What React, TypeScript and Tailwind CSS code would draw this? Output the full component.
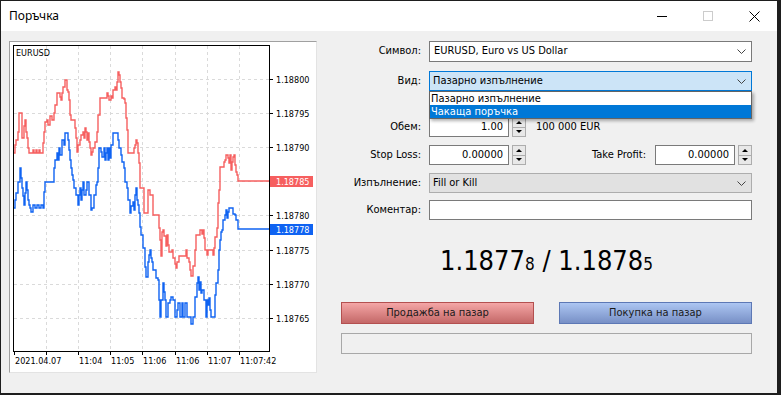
import React from "react";

const RED = "#f65f5f";
const BLUE = "#0f63f2";

const redPts: number[][] = [
  [14, 153], [15, 145], [16, 140], [18, 132], [19, 113], [21, 113], [22, 125], [22, 138], [24, 126], [25, 120],
  [26, 132], [27, 138], [28, 148], [29, 153], [32, 153], [33, 150], [34, 153], [36, 150], [37, 153], [39, 150],
  [40, 153], [42, 153], [43, 143], [44, 132], [45, 122], [47, 120], [48, 125], [50, 116], [52, 120], [54, 113],
  [55, 105], [57, 93], [59, 93], [60, 97], [61, 100], [62, 93], [63, 87], [65, 87], [65, 80], [67, 80],
  [67, 90], [68, 92], [69, 100], [70, 115], [71, 120], [74, 120], [75, 128], [76, 138], [77, 152], [78, 145],
  [80, 140], [81, 135], [83, 132], [84, 138], [85, 128], [86, 132], [87, 140], [88, 133], [89, 142], [90, 148],
  [91, 155], [92, 152], [93, 148], [95, 142], [97, 132], [98, 115], [100, 98], [106, 98], [107, 93], [108, 96],
  [109, 100], [111, 96], [112, 98], [113, 90], [115, 87], [116, 90], [117, 82], [118, 72], [119, 75], [120, 82],
  [121, 88], [122, 98], [124, 99], [125, 103], [126, 118], [127, 130], [128, 153], [133, 153], [134, 148], [135, 145],
  [136, 140], [137, 143], [138, 153], [139, 163], [140, 188], [143, 188], [144, 213], [147, 213], [148, 190], [150, 195],
  [153, 195], [153, 215], [158, 215], [159, 228], [160, 240], [161, 256], [162, 232], [163, 230], [164, 236], [166, 246],
  [167, 235], [168, 245], [169, 252], [172, 250], [173, 258], [175, 264], [176, 268], [177, 262], [179, 256], [185, 256],
  [186, 250], [187, 258], [189, 262], [190, 270], [191, 276], [193, 266], [195, 250], [196, 235], [199, 235], [200, 230],
  [202, 234], [203, 230], [204, 238], [205, 250], [207, 255], [208, 250], [211, 250], [213, 255], [214, 248], [215, 237],
  [217, 228], [218, 203], [219, 190], [220, 167], [223, 167], [224, 162], [225, 160], [226, 155], [228, 158], [229, 163],
  [230, 155], [231, 170], [232, 162], [233, 157], [234, 155], [235, 165], [236, 172], [237, 175], [238, 181], [269, 181],
];

const bluePts: number[][] = [
  [14, 208], [15, 200], [16, 193], [18, 182], [20, 168], [21, 178], [22, 188], [23, 196], [24, 205], [25, 193],
  [26, 182], [27, 190], [28, 200], [29, 205], [30, 208], [31, 212], [33, 205], [35, 208], [37, 205], [39, 208],
  [41, 205], [43, 208], [44, 192], [45, 182], [53, 182], [54, 168], [55, 160], [57, 153], [58, 160], [59, 148],
  [60, 155], [62, 140], [64, 145], [65, 133], [67, 133], [68, 140], [69, 150], [70, 160], [71, 168], [72, 175],
  [73, 180], [74, 188], [76, 195], [78, 205], [79, 195], [80, 188], [81, 200], [82, 190], [83, 182], [84, 195],
  [86, 190], [87, 182], [89, 195], [91, 210], [92, 208], [94, 195], [96, 185], [97, 182], [98, 168], [99, 148],
  [101, 152], [102, 157], [104, 148], [105, 160], [106, 153], [107, 148], [108, 160], [109, 148], [110, 158], [111, 145],
  [113, 133], [117, 133], [118, 140], [119, 148], [121, 155], [122, 162], [124, 168], [125, 182], [127, 188], [128, 200],
  [130, 213], [131, 206], [133, 202], [134, 210], [135, 195], [136, 188], [137, 200], [138, 205], [139, 213], [140, 227],
  [141, 235], [143, 248], [145, 267], [146, 277], [148, 262], [149, 255], [150, 250], [151, 258], [152, 262], [153, 270],
  [155, 270], [156, 278], [158, 280], [159, 300], [160, 317], [161, 300], [163, 283], [164, 292], [165, 300], [166, 317],
  [168, 303], [170, 300], [171, 297], [173, 300], [175, 317], [177, 310], [178, 303], [180, 317], [182, 303], [183, 317],
  [185, 303], [187, 317], [190, 317], [191, 324], [193, 317], [195, 297], [197, 283],
  [198, 277], [199, 290], [200, 282], [201, 293], [202, 290], [204, 300], [206, 317], [207, 300], [208, 305], [209, 298],
  [210, 310], [211, 317], [214, 317], [215, 295], [216, 283], [218, 270], [219, 250], [220, 240], [221, 232], [222, 230],
  [223, 220], [225, 215], [226, 210], [227, 218], [228, 212], [229, 208], [232, 208], [233, 214], [235, 215], [236, 220],
  [238, 229], [269, 229],
];

const stepPath = (pts: number[][]) => {
  let d = `M${pts[0][0]} ${pts[0][1]}`;
  for (let i = 1; i < pts.length; i++) {
    d += ` H${pts[i][0]} V${pts[i][1]}`;
  }
  return d;
};

const priceLevels = ["1.18800", "1.18795", "1.18790", "1.18785", "1.18780", "1.18775", "1.18770", "1.18765"];
const gridY = (i: number) => 79 + i * 34.1;
const gridX = (i: number) => 14 + i * 32.1;
const timeLabels: [number, string][] = [
  [0, "2021.04.07"],
  [2, "11:04"],
  [3, "11:05"],
  [4, "11:06"],
  [5, "11:06"],
  [6, "11:07"],
  [7, "11:07:42"],
];

const chartFont = '"DejaVu Sans Condensed", "Liberation Sans", sans-serif';

const Chart = () => (
  <div className="w-[308px] h-[332px] border border-t-[#a0a0a0] border-l-[#a0a0a0] border-b-[#e3e3e3] border-r-[#e3e3e3] bg-white shrink-0">
    <svg width={306} height={330} viewBox="10 42 306 330" className="block">
      <g stroke="#dadada" strokeWidth={1} strokeDasharray="3 3" shapeRendering="crispEdges">
        {priceLevels.map((_, i) => (
          <line key={"h" + i} x1={14} x2={269} y1={Math.round(gridY(i)) + 0.5} y2={Math.round(gridY(i)) + 0.5} />
        ))}
        {[1, 2, 3, 4, 5, 6, 7].map((i) => (
          <line key={"v" + i} y1={46} y2={351} x1={Math.round(gridX(i)) + 0.5} x2={Math.round(gridX(i)) + 0.5} />
        ))}
      </g>
      <path d={stepPath(redPts)} fill="none" stroke={RED} strokeWidth={1.4} />
      <path d={stepPath(bluePts)} fill="none" stroke={BLUE} strokeWidth={1.4} />
      <rect x={13.5} y={45.5} width={256} height={306} fill="none" stroke="#000" shapeRendering="crispEdges" />
      <g stroke="#000" shapeRendering="crispEdges">
        {priceLevels.map((_, i) => (
          <line key={"pt" + i} x1={269} x2={273} y1={Math.round(gridY(i)) + 0.5} y2={Math.round(gridY(i)) + 0.5} />
        ))}
        {[0, 1, 2, 3, 4, 5, 6, 7].map((i) => (
          <line key={"tt" + i} y1={351} y2={355} x1={Math.round(gridX(i)) + 0.5} x2={Math.round(gridX(i)) + 0.5} />
        ))}
      </g>
      <g fontFamily={chartFont} fontSize={9} fill="#000">
        <text x={16} y={56}>EURUSD</text>
        {priceLevels.map((p, i) =>
          i === 3 ? null : (
            <text key={p} x={276} y={Math.round(gridY(i)) + 4}>
              {p}
            </text>
          )
        )}
        {timeLabels.map(([i, t], k) => (
          <text key={k} x={Math.round(gridX(i)) + 1} y={364}>
            {t}
          </text>
        ))}
      </g>
      <rect x={270} y={176} width={43} height={11} fill={RED} />
      <text x={276} y={185} fontFamily={chartFont} fontSize={9} fill="#fff">
        1.18785
      </text>
      <rect x={270} y={224} width={43} height={11} fill={BLUE} />
      <text x={276} y={233} fontFamily={chartFont} fontSize={9} fill="#fff">
        1.18778
      </text>
    </svg>
  </div>
);

const Chevron = () => (
  <svg width="9" height="5" viewBox="0 0 9 5" className="shrink-0">
    <polyline points="0.5,0.5 4.5,4.5 8.5,0.5" fill="none" stroke="#444" strokeWidth="1" />
  </svg>
);

const Spinner = () => (
  <div className="flex flex-col w-[14px] h-[20px] border border-[#adadad] bg-[#e8e8e8] shrink-0">
    <div className="flex-1 flex items-center justify-center border-b border-[#adadad]">
      <div className="w-0 h-0 border-l-[3px] border-r-[3px] border-b-[3px] border-l-transparent border-r-transparent border-b-black" />
    </div>
    <div className="flex-1 flex items-center justify-center">
      <div className="w-0 h-0 border-l-[3px] border-r-[3px] border-t-[3px] border-l-transparent border-r-transparent border-t-black" />
    </div>
  </div>
);

const Label = ({ children }: { children: React.ReactNode }) => (
  <div className="w-[80px] text-right shrink-0">{children}</div>
);

const NumInput = ({ value }: { value: string }) => (
  <div className="w-[80px] h-[20px] border border-[#7a7a7a] bg-white flex items-center justify-end pr-[5px] shrink-0">
    {value}
  </div>
);

export default function App() {
  return (
    <div className="w-[781px] h-[395px] bg-[#1e1e1e] pl-[1px] pt-[1px] overflow-hidden">
      <div
        className="w-[776px] h-[392px] flex flex-col bg-[#f0f0f0] text-[11px] text-black"
        style={{ fontFamily: '"DejaVu Sans Condensed", "Liberation Sans", sans-serif' }}
      >
        {/* title bar */}
        <div className="h-[30px] bg-white flex items-center shrink-0">
          <div className="pl-[8px] text-[12px] flex-1" style={{ fontFamily: '"Noto Sans", "Liberation Sans", sans-serif' }}>
            Поръчка
          </div>
          <div className="w-[46px] h-full flex items-center justify-center">
            <div className="w-[10px] h-[1px] bg-black" />
          </div>
          <div className="w-[46px] h-full flex items-center justify-center">
            <div className="w-[10px] h-[10px] border border-[#cccccc]" />
          </div>
          <div className="w-[46px] h-full flex items-center justify-center">
            <svg width="11" height="11" viewBox="0 0 11 11">
              <path d="M0.5 0.5 L10.5 10.5 M10.5 0.5 L0.5 10.5" stroke="#000" strokeWidth="1" />
            </svg>
          </div>
        </div>

        {/* body */}
        <div className="flex-1 flex pl-[8px] pt-[10px] gap-[24px]">
          <Chart />

          <div className="w-[411px] flex flex-col">
            <div className="flex items-center gap-[8px] h-[21px]">
              <Label>Символ:</Label>
              <div className="w-[323px] h-[21px] border border-[#7a7a7a] bg-white flex items-center pl-[4px] pr-[5px]">
                <span className="flex-1">EURUSD, Euro vs US Dollar</span>
                <Chevron />
              </div>
            </div>

            <div className="flex items-center gap-[8px] h-[20px] mt-[9px]">
              <Label>Вид:</Label>
              <div className="relative w-[323px] h-[20px]">
                <div className="w-full h-full border border-[#0078d7] bg-[#cce4f7] flex items-center pl-[3px] pr-[5px]">
                  <span className="flex-1">Пазарно изпълнение</span>
                  <Chevron />
                </div>
                <div className="absolute left-0 top-[20px] w-[323px] border border-[#646464] bg-white shadow-[2px_2px_3px_rgba(0,0,0,0.3)] z-10">
                  <div className="h-[13px] leading-[13px] pl-[1px]">Пазарно изпълнение</div>
                  <div className="h-[13px] leading-[13px] pl-[1px] bg-[#0078d7] text-white">Чакаща поръчка</div>
                </div>
              </div>
            </div>

            <div className="flex items-center gap-[8px] h-[20px] mt-[26px]">
              <Label>Обем:</Label>
              <NumInput value="1.00" />
              <div className="-ml-[5px]">
                <Spinner />
              </div>
              <span className="ml-[2px]">100 000 EUR</span>
            </div>

            <div className="flex items-center gap-[8px] h-[20px] mt-[8px]">
              <Label>Stop Loss:</Label>
              <NumInput value="0.00000" />
              <div className="-ml-[5px]">
                <Spinner />
              </div>
              <div className="flex-1 text-right pr-[1px]">Take Profit:</div>
              <NumInput value="0.00000" />
              <div className="-ml-[5px]">
                <Spinner />
              </div>
            </div>

            <div className="flex items-center gap-[8px] h-[20px] mt-[8px]">
              <Label>Изпълнение:</Label>
              <div className="w-[323px] h-[20px] border border-[#adadad] bg-[#e1e1e1] flex items-center pl-[3px] pr-[5px]">
                <span className="flex-1">Fill or Kill</span>
                <Chevron />
              </div>
            </div>

            <div className="flex items-center gap-[8px] h-[20px] mt-[7px]">
              <Label>Коментар:</Label>
              <div className="w-[323px] h-[20px] border border-[#7a7a7a] bg-white" />
            </div>

            <div className="mt-[27px] h-[30px] flex items-baseline justify-center leading-none">
              <span className="text-[27px]">1.1877</span>
              <span className="text-[17px]">8</span>
              <span className="text-[27px]">&nbsp;/&nbsp;1.1878</span>
              <span className="text-[17px]">5</span>
            </div>

            <div className="flex justify-between mt-[25px]">
              <button className="w-[193px] h-[22px] border border-[#b35050] bg-gradient-to-b from-[#f4a6a6] to-[#c46868] text-[11px] text-[#1a1a1a]">
                Продажба на пазар
              </button>
              <button className="w-[193px] h-[22px] border border-[#5d78b5] bg-gradient-to-b from-[#adc6f2] to-[#7890c6] text-[11px] text-[#1a1a1a]">
                Покупка на пазар
              </button>
            </div>

            <div className="mt-[9px] w-[411px] h-[21px] border border-[#a8a8a8] bg-[#f0f0f0]" />
          </div>
        </div>
      </div>
    </div>
  );
}
